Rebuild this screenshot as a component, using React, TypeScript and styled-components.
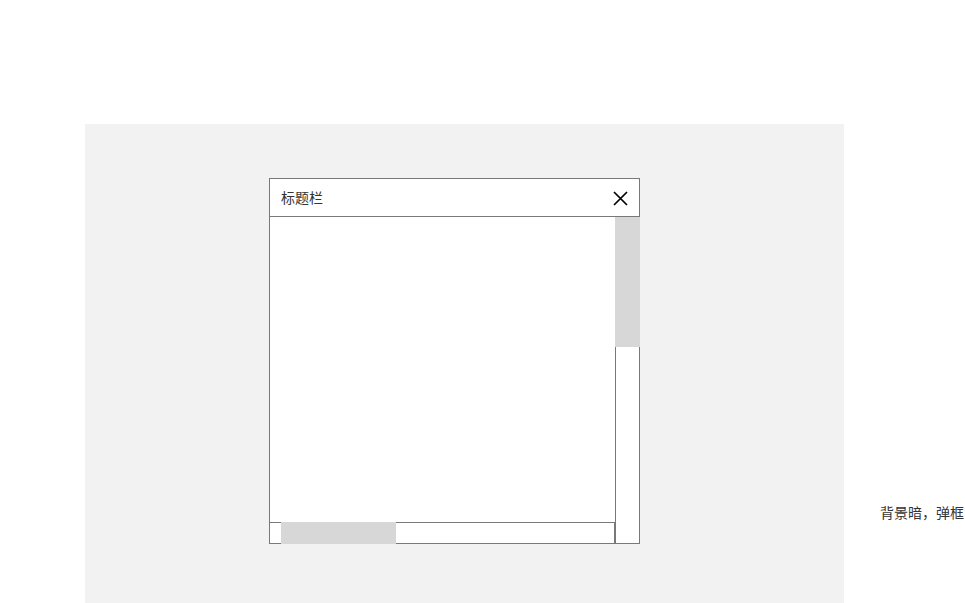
import styled, { createGlobalStyle } from 'styled-components';

const GlobalStyle = createGlobalStyle`
  html, body {
    margin: 0;
    padding: 0;
    background: #ffffff;
    overflow: hidden;
  }
  body {
    font-family: "Noto Sans CJK SC", "Noto Sans", sans-serif;
    color: #333333;
  }
`;

const BORDER = '#797979';
const THUMB = '#d7d7d7';

const Page = styled.div`
  display: flex;
  align-items: flex-start;
  padding: 124px 0 0 85px;
`;

const Backdrop = styled.div`
  box-sizing: border-box;
  width: 759px;
  height: 479px;
  padding: 54px 0 0 184px;
  background: #f2f2f2;
  flex-shrink: 0;
`;

const Note = styled.div`
  margin: 378px 0 0 36px;
  font-size: 14px;
  line-height: 20px;
  white-space: nowrap;
`;

const Dialog = styled.div`
  box-sizing: border-box;
  width: 371px;
  height: 366px;
  border: 1px solid ${BORDER};
  background: #ffffff;
  display: flex;
  flex-direction: column;
`;

const TitleBar = styled.div`
  height: 37px;
  border-bottom: 1px solid ${BORDER};
  display: flex;
  align-items: center;
  justify-content: space-between;
  padding: 0 11px;
`;

const Title = styled.span`
  font-size: 14px;
  line-height: 20px;
  margin-top: -2px;
  color: #333333;
`;

const CloseButton = styled.button`
  border: 0;
  padding: 0;
  margin: 2px 0 0;
  background: none;
  width: 15px;
  height: 15px;
  display: flex;
  cursor: pointer;
`;

const Body = styled.div`
  flex: 1;
  display: grid;
  grid-template-columns: 1fr 24px;
  grid-template-rows: 1fr 21px;
`;

const Content = styled.div`
  grid-column: 1;
  grid-row: 1;
`;

const VTrack = styled.div`
  grid-column: 2;
  grid-row: 1 / 3;
  border-left: 1px solid ${BORDER};
`;

const VThumb = styled.div<{ $size: number }>`
  height: ${(p) => p.$size}px;
  margin: 0 -1px 0 -1px;
  background: ${THUMB};
`;

const HTrack = styled.div`
  grid-column: 1;
  grid-row: 2;
  box-sizing: border-box;
  height: 22px;
  margin: 0 0 -1px -1px;
  border: 1px solid ${BORDER};
  display: flex;
`;

const HThumb = styled.div<{ $size: number; $offset: number }>`
  width: ${(p) => p.$size}px;
  height: 22px;
  margin: -1px 0 0 ${(p) => p.$offset}px;
  background: ${THUMB};
`;

const CloseIcon = () => (
  <svg width="15" height="15" viewBox="0 0 15 15" fill="none">
    <path d="M1 1 L14 14 M14 1 L1 14" stroke="#000000" strokeWidth="1.7" />
  </svg>
);

const App = () => {
  return (
    <>
      <GlobalStyle />
      <Page>
        <Backdrop>
          <Dialog>
            <TitleBar>
              <Title>标题栏</Title>
              <CloseButton aria-label="关闭">
                <CloseIcon />
              </CloseButton>
            </TitleBar>
            <Body>
              <Content />
              <VTrack>
                <VThumb $size={130} />
              </VTrack>
              <HTrack>
                <HThumb $size={115} $offset={11} />
              </HTrack>
            </Body>
          </Dialog>
        </Backdrop>
        <Note>背景暗，弹框</Note>
      </Page>
    </>
  );
};

export default App;
